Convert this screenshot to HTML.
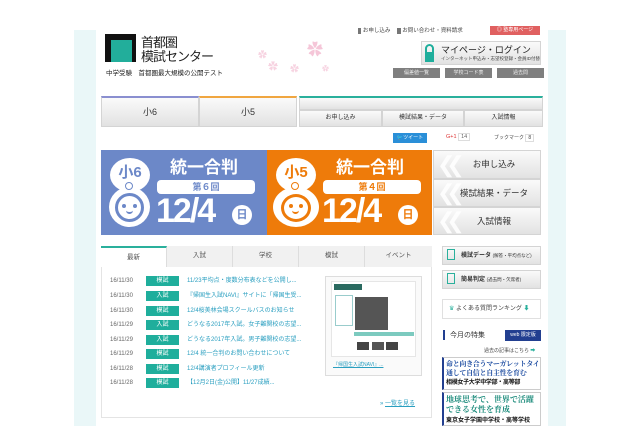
<!DOCTYPE html>
<html><head><meta charset="utf-8"><style>
*{margin:0;padding:0;box-sizing:border-box}
body{width:640px;height:426px;background:#fff;position:relative;overflow:hidden;font-family:"Liberation Sans","Noto Sans CJK JP",sans-serif;color:#333}
.a{position:absolute}
.band{background:#eaf7f8;top:30px;height:396px}
.btn{background:linear-gradient(#fafafa,#e2e2e2);border:1px solid #d4d4d4;text-align:center;color:#333}
.g{background:#7f7f7f;color:#eee;font-size:5px;text-align:center;line-height:10px;height:10px}
.row{position:absolute;left:110px;font-size:6px;height:10px;line-height:10px;white-space:nowrap}
.row .d{color:#666;display:inline-block;width:36px}
.row .t{display:inline-block;width:33px;background:#1fae9c;color:#fff;text-align:center;margin-right:8px}
.row .l{color:#2a9fc0}
.tab{position:absolute;top:246px;height:21px;line-height:20px;font-size:6.5px;text-align:center;color:#555;background:#f1f1f1;border-right:1px solid #ddd}
.chev{position:absolute;left:437px;font-size:22px;color:#fff;line-height:26px;letter-spacing:-9px;opacity:.9}
.eye{position:absolute;width:4px;height:4px;border-radius:50%}
</style></head><body>
<div class="a band" style="left:74px;width:22px"></div>
<div class="a band" style="left:548px;width:18px"></div>

<!-- logo -->
<div class="a" style="left:105px;top:34px;width:31px;height:28px;background:#111"></div>
<div class="a" style="left:111px;top:40px;width:21px;height:22px;background:#22ae9b"></div>
<div class="a" style="left:141px;top:36px;font-size:13px;line-height:14px;color:#222;letter-spacing:-1px">首都圏<br>模試センター</div>
<div class="a" style="left:106px;top:67px;font-size:6.5px;color:#222;white-space:nowrap">中学受験　首都圏最大規模の公開テスト</div>
<div class="a" style="left:258px;top:48px;font-size:9px;color:#f7d3e1">✿</div>
<div class="a" style="left:268px;top:58px;font-size:10px;color:#f7d3e1">✿</div>
<div class="a" style="left:307px;top:36px;font-size:16px;color:#f5c6d8">✿</div>
<div class="a" style="left:290px;top:62px;font-size:9px;color:#f7d3e1">✿</div>
<div class="a" style="left:322px;top:64px;font-size:7px;color:#f7d3e1">✿</div>

<!-- top links -->
<div class="a" style="left:358px;top:26px;font-size:5.5px;color:#444;white-space:nowrap"><span style="background:#777;color:#777">■</span> お申し込み　 <span style="background:#777;color:#777">■</span> お問い合わせ・資料請求</div>
<div class="a" style="left:490px;top:26px;width:50px;height:9px;background:#e06060;color:#fff;font-size:5px;line-height:9px;text-align:center">◎ 塾専用ページ</div>
<div class="a btn" style="left:421px;top:41px;width:120px;height:24px"></div>
<div class="a" style="left:425px;top:44px;width:9px;height:18px;border:2px solid #1fae9c;border-radius:5px 5px 0 0;border-bottom:none"></div>
<div class="a" style="left:425px;top:52px;width:9px;height:10px;background:#1fae9c"></div>
<div class="a" style="left:441px;top:43px;font-size:9px;color:#222;white-space:nowrap">マイページ・ログイン</div>
<div class="a" style="left:441px;top:56px;font-size:4.5px;color:#444;white-space:nowrap">インターネット申込み・志望校登録・会員ID付替</div>
<div class="a g" style="left:393px;top:68px;width:47px">偏差値一覧</div>
<div class="a g" style="left:445px;top:68px;width:47px">学校コード表</div>
<div class="a g" style="left:497px;top:68px;width:47px">過去問</div>

<!-- nav -->
<div class="a btn" style="left:101px;top:96px;width:98px;height:31px;border-top:2px solid #8a8fd0;font-size:9px;line-height:28px">小6</div>
<div class="a btn" style="left:199px;top:96px;width:98px;height:31px;border-top:2px solid #f0a640;font-size:9px;line-height:28px">小5</div>
<div class="a btn" style="left:299px;top:96px;width:244px;height:14px;border-top:2px solid #2ab09c"></div>
<div class="a btn" style="left:299px;top:110px;width:83px;height:17px;font-size:6px;line-height:15px">お申し込み</div>
<div class="a btn" style="left:382px;top:110px;width:82px;height:17px;font-size:6px;line-height:15px">模試結果・データ</div>
<div class="a btn" style="left:464px;top:110px;width:79px;height:17px;font-size:6px;line-height:15px">入試情報</div>

<!-- social -->
<div class="a" style="left:393px;top:133px;width:34px;height:10px;background:#2a8fd8;color:#fff;font-size:5px;line-height:10px;text-align:center">🐦ツイート</div>
<div class="a" style="left:446px;top:134px;font-size:5.5px;color:#d33;white-space:nowrap">G+1 <span style="color:#666;border:1px solid #ddd;padding:0 2px">14</span></div>
<div class="a" style="left:494px;top:134px;font-size:5px;color:#444;white-space:nowrap">ブックマーク <span style="border:1px solid #ddd;padding:0 2px">8</span></div>

<!-- banners -->
<div class="a" style="left:101px;top:150px;width:166px;height:85px;background:#6c88c8"></div>
<div class="a" style="left:267px;top:150px;width:165px;height:85px;background:#ee7b0a"></div>
<div class="a" style="left:110px;top:158px;width:40px;height:34px;border-radius:50%;background:#fff;color:#6c88c8;font-size:15px;font-weight:bold;text-align:center;line-height:30px">小6</div>
<div class="a" style="left:109px;top:187px;width:41px;height:40px;border-radius:50%;background:#fff"></div>
<div class="a" style="left:276px;top:158px;width:40px;height:34px;border-radius:50%;background:#fff;color:#ee7b0a;font-size:15px;font-weight:bold;text-align:center;line-height:30px">小5</div>
<div class="a" style="left:273px;top:187px;width:46px;height:40px;border-radius:50%;background:#fff"></div>
<div class="a" style="left:125px;top:182px;width:8px;height:8px;border-radius:50%;border:1px solid #6c88c8"></div>
<div class="a" style="left:291px;top:182px;width:8px;height:8px;border-radius:50%;border:1px solid #ee7b0a"></div>
<div class="a" style="left:115px;top:193px;width:29px;height:29px;border-radius:50%;border:3px solid #6c88c8"></div>
<div class="a" style="left:281px;top:194px;width:30px;height:28px;border-radius:50%;border:3px solid #ee7b0a"></div>
<div class="eye" style="left:122px;top:204px;background:#6c88c8"></div><div class="eye" style="left:133px;top:204px;background:#6c88c8"></div>
<div class="eye" style="left:289px;top:204px;background:#ee7b0a"></div><div class="eye" style="left:299px;top:204px;background:#ee7b0a"></div>
<div class="a" style="left:126px;top:210px;width:7px;height:4px;border-bottom:2px solid #6c88c8;border-radius:0 0 4px 4px"></div>
<div class="a" style="left:292px;top:210px;width:7px;height:4px;border-bottom:2px solid #ee7b0a;border-radius:0 0 4px 4px"></div>
<div class="a" style="left:170px;top:153px;font-size:17px;font-weight:bold;color:#fff">統一合判</div>
<div class="a" style="left:336px;top:153px;font-size:17px;font-weight:bold;color:#fff">統一合判</div>
<div class="a" style="left:157px;top:180px;width:98px;height:14px;background:#fff;border-radius:4px;color:#6c88c8;font-size:9px;text-align:center;line-height:14px;font-weight:bold">第６回</div>
<div class="a" style="left:323px;top:180px;width:98px;height:14px;background:#fff;border-radius:4px;color:#ee7b0a;font-size:9px;text-align:center;line-height:14px;font-weight:bold">第４回</div>
<div class="a" style="left:156px;top:192px;font-size:34px;font-weight:bold;color:#fff;letter-spacing:-2px">12/4</div>
<div class="a" style="left:322px;top:192px;font-size:34px;font-weight:bold;color:#fff;letter-spacing:-2px">12/4</div>
<div class="a" style="left:232px;top:205px;width:20px;height:20px;border-radius:50%;background:#fff;color:#6c88c8;font-size:11px;font-weight:bold;text-align:center;line-height:20px">日</div>
<div class="a" style="left:398px;top:205px;width:20px;height:20px;border-radius:50%;background:#fff;color:#ee7b0a;font-size:11px;font-weight:bold;text-align:center;line-height:20px">日</div>
<div class="a btn" style="left:433px;top:150px;width:108px;height:29px;font-size:8.5px;line-height:27px;padding-left:14px">お申し込み</div>
<div class="a btn" style="left:433px;top:179px;width:108px;height:28px;font-size:8.5px;line-height:26px;padding-left:14px">模試結果・データ</div>
<div class="a btn" style="left:433px;top:207px;width:108px;height:28px;font-size:8.5px;line-height:26px;padding-left:14px">入試情報</div>
<div class="chev" style="top:152px">❮❮</div>
<div class="chev" style="top:180px">❮❮</div>
<div class="chev" style="top:208px">❮❮</div>

<!-- news box -->
<div class="a" style="left:101px;top:246px;width:331px;height:172px;border:1px solid #e4e4e4"></div>
<div class="tab" style="left:101px;width:66px;background:#fff;border-top:2px solid #2ab09c">最新</div>
<div class="tab" style="left:167px;width:66px">入試</div>
<div class="tab" style="left:233px;width:66px">学校</div>
<div class="tab" style="left:299px;width:66px">模試</div>
<div class="tab" style="left:365px;width:67px;border-right:none">イベント</div>
<div class="row" style="top:276px"><span class="d">16/11/30</span><span class="t">模試</span><span class="l">11/23平均点・度数分布表などを公開し...</span></div>
<div class="row" style="top:291px"><span class="d">16/11/30</span><span class="t">入試</span><span class="l">『帰国生入試NAVI』サイトに「帰国生受...</span></div>
<div class="row" style="top:306px"><span class="d">16/11/30</span><span class="t">模試</span><span class="l">12/4桜美林会場スクールバスのお知らせ</span></div>
<div class="row" style="top:320px"><span class="d">16/11/29</span><span class="t">入試</span><span class="l">どうなる2017年入試。女子難関校の志望...</span></div>
<div class="row" style="top:335px"><span class="d">16/11/29</span><span class="t">入試</span><span class="l">どうなる2017年入試。男子難関校の志望...</span></div>
<div class="row" style="top:349px"><span class="d">16/11/29</span><span class="t">模試</span><span class="l">12/4 統一合判のお問い合わせについて</span></div>
<div class="row" style="top:364px"><span class="d">16/11/28</span><span class="t">模試</span><span class="l">12/4講演者プロフィール更新</span></div>
<div class="row" style="top:378px"><span class="d">16/11/28</span><span class="t">模試</span><span class="l">【12月2日(金)公開】11/27成績...</span></div>
<div class="a" style="left:325px;top:276px;width:97px;height:100px;border:1px solid #ddd;background:#fafafa"></div>
<div class="a" style="left:331px;top:281px;width:85px;height:76px;background:#fff;border:1px solid #e6e6e6"></div>
<div class="a" style="left:334px;top:284px;width:28px;height:6px;background:#2a6a60"></div>
<div class="a" style="left:335px;top:295px;width:18px;height:31px;border:1px solid #9cc"></div>
<div class="a" style="left:355px;top:297px;width:33px;height:33px;background:#555"></div>
<div class="a" style="left:354px;top:332px;width:60px;height:4px;background:#7ccabf"></div>
<div class="a" style="left:357px;top:342px;width:12px;height:8px;background:#444"></div>
<div class="a" style="left:372px;top:342px;width:12px;height:8px;background:#555"></div>
<div class="a" style="left:386px;top:342px;width:12px;height:8px;background:#444"></div>
<div class="a" style="left:333px;top:361px;font-size:5px;color:#2a9fc0;text-decoration:underline">『帰国生入試NAVI』...</div>
<div class="a" style="left:380px;top:398px;font-size:6px;color:#2a9fc0">» <u>一覧を見る</u></div>

<!-- sidebar -->
<div class="a btn" style="left:442px;top:246px;width:99px;height:19px;font-size:6px;line-height:17px;text-align:left;padding-left:18px;font-weight:bold">模試データ <span style="font-weight:normal;font-size:4.5px">(解答・平均点など)</span></div>
<div class="a btn" style="left:442px;top:270px;width:99px;height:19px;font-size:6px;line-height:17px;text-align:left;padding-left:18px;font-weight:bold">簡易判定 <span style="font-weight:normal;font-size:4.5px">(過去問・欠席者)</span></div>
<div class="a" style="left:447px;top:249px;width:8px;height:11px;border:1.5px solid #2ab09c"></div>
<div class="a" style="left:447px;top:273px;width:8px;height:11px;border:1.5px solid #2ab09c"></div>
<div class="a" style="left:442px;top:299px;width:99px;height:20px;border:1px solid #e0e0e0;font-size:6px;line-height:18px;padding-left:6px;color:#444"><span style="color:#2ab09c">♛</span> よくある質問ランキング <span style="color:#2ab09c">⬇</span></div>
<div class="a" style="left:443px;top:330px;font-size:7px;color:#333;border-left:2px solid #223f90;padding-left:5px">今月の特集</div>
<div class="a" style="left:505px;top:330px;width:36px;height:11px;background:#223f90;color:#fff;font-size:5px;line-height:11px;text-align:center">web 限定版</div>
<div class="a" style="left:484px;top:347px;font-size:5px;color:#444">過去の記事はこちら <span style="color:#2ab09c">➡</span></div>
<div class="a" style="left:442px;top:357px;width:99px;height:33px;border:1px solid #ccc;border-left:2px solid #223f90;font-family:'Noto Serif CJK SC',serif;font-size:7px;line-height:9px;color:#1a4aa0;font-weight:bold;padding:2px;white-space:nowrap;overflow:hidden;letter-spacing:-0.3px">命と向き合うマーガレットタイムを<br>通して自信と自主性を育む<br><span style="color:#111;font-size:6px;font-family:'Liberation Sans','Noto Sans CJK JP',sans-serif">相模女子大学中学部・高等部</span></div>
<div class="a" style="left:442px;top:392px;width:99px;height:34px;border:1px solid #ccc;border-left:2px solid #223f90;font-family:'Noto Serif CJK SC',serif;font-size:8px;line-height:10px;color:#1a8a7a;font-weight:bold;padding:2px;white-space:nowrap;overflow:hidden">地球思考で、世界で活躍<br>できる女性を育成<br><span style="color:#111;font-size:6px;font-family:'Liberation Sans','Noto Sans CJK JP',sans-serif">東京女子学園中学校・高等学校</span></div>
</body></html>
